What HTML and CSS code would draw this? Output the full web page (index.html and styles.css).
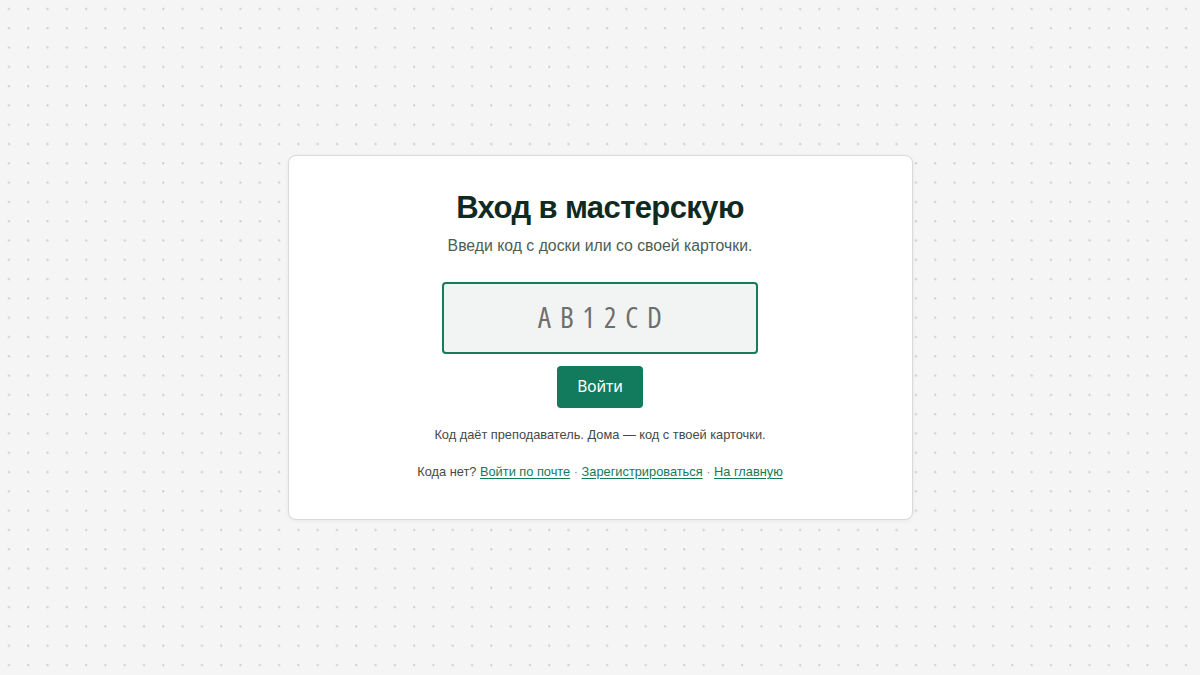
FILE: index.html
```html
<!DOCTYPE html>
<html lang="ru">
<head>
<meta charset="utf-8">
<title>Вход в мастерскую</title>
<link rel="stylesheet" href="styles.css">
</head>
<body>
<main class="page">
  <section class="card">
    <h1 class="title">Вход в мастерскую</h1>
    <p class="subtitle">Введи код с доски или со своей карточки.</p>
    <form class="form">
      <input class="code" type="text" placeholder="AB12CD" maxlength="6">
      <button class="btn" type="button">Войти</button>
    </form>
    <p class="note">Код даёт преподаватель. Дома — код с твоей карточки.</p>
    <p class="links">Кода нет? <a href="#">Войти по почте</a> <span class="sep">·</span> <a href="#">Зарегистрироваться</a> <span class="sep">·</span> <a href="#">На главную</a></p>
  </section>
</main>
</body>
</html>
```

FILE: styles.css
```css
* { box-sizing: border-box; }
html, body { margin: 0; padding: 0; height: 100%; }
body {
  font-family: "Liberation Sans", Arial, sans-serif;
  background-color: #f4f5f4;
  background-image: radial-gradient(circle at 9px 9px, #cdd1cf 0.9px, transparent 1.4px);
  background-size: 19.3px 19.3px;
  color: #1d2b24;
}
.page {
  min-height: 100%;
  display: flex;
  align-items: center;
  justify-content: center;
}
.card {
  width: 625px;
  background: #fff;
  border: 1px solid #d6dad8;
  border-radius: 8px;
  box-shadow: 0 1px 4px rgba(0,0,0,0.06);
  padding: 33px 32px 38px;
  display: flex;
  flex-direction: column;
  align-items: center;
  text-align: center;
}
.title {
  margin: 0;
  font-size: 31px;
  font-weight: 700;
  letter-spacing: -0.6px;
  color: #102a1f;
  line-height: 38px;
}
.subtitle {
  margin: 9px 0 0;
  font-size: 15.8px;
  color: #4b5d54;
  line-height: 20px;
}
.form {
  margin-top: 26px;
  display: flex;
  flex-direction: column;
  align-items: center;
  gap: 12px;
}
.code {
  width: 316px;
  height: 72px;
  border: 2px solid #187a58;
  border-radius: 4px;
  background: #f2f4f3;
  text-align: center;
  font-family: "Open Sans", "Noto Sans", sans-serif;
  font-stretch: 75%;
  font-size: 29px;
  letter-spacing: 9px;
  padding: 0 0 4px 9px;
  color: #333;
  outline: none;
}
.code::placeholder { color: #6e6e6e; opacity: 1; }
.btn {
  width: 86px;
  height: 42px;
  border: none;
  border-radius: 4px;
  background: #127b5d;
  color: #fff;
  font-family: "Noto Sans", "Open Sans", sans-serif;
  font-size: 15.5px;
  padding: 0 0 3px;
  cursor: pointer;
}
.note {
  margin: 18px 0 0;
  font-size: 12.8px;
  color: #444a47;
  line-height: 18px;
}
.links {
  margin: 19px 0 0;
  font-size: 12.8px;
  color: #444a47;
  line-height: 18px;
}
.links a { color: #147a5a; text-decoration: underline; text-underline-offset: 2px; }
.sep { color: #8a8f8c; }
```
